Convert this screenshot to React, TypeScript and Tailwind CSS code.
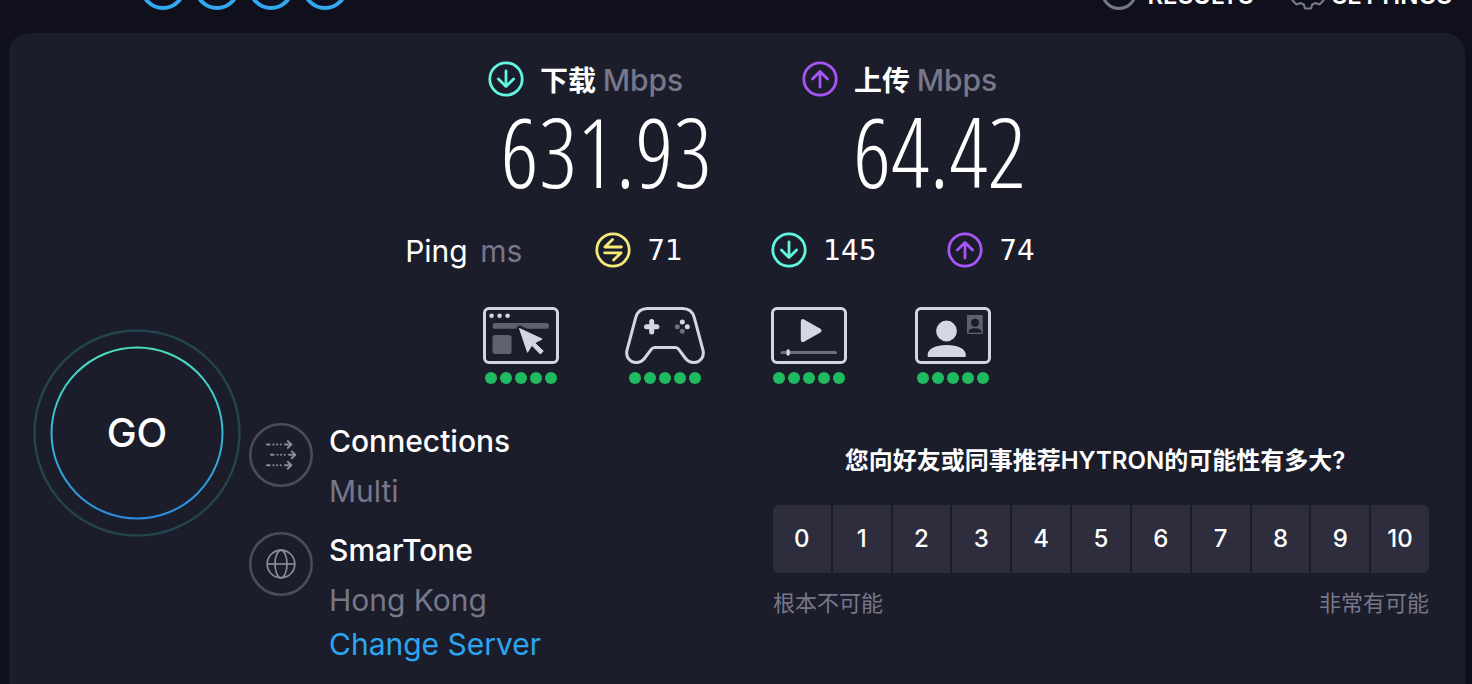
import type { ReactNode } from "react";

const RATINGS = [0, 1, 2, 3, 4, 5, 6, 7, 8, 9, 10];

function ArrowCircle({ direction }: { direction: "down" | "up" }) {
  const down = direction === "down";
  return (
    <svg
      viewBox="0 0 36 36"
      className={down ? "size-9 shrink-0 text-[#62f5e0]" : "size-9 shrink-0 text-[#a855f7]"}
      fill="none"
      stroke="currentColor"
      strokeWidth="2.8"
      strokeLinecap="round"
      strokeLinejoin="round"
      aria-hidden="true"
    >
      <circle cx="18" cy="18" r="16.2" />
      <path d={down ? "M18 10v15.4M10.4 18l7.6 7.6 7.6-7.6" : "M18 26V10.6M10.4 18l7.6-7.6 7.6 7.6"} />
    </svg>
  );
}

function IdleCircle() {
  return (
    <svg
      viewBox="0 0 36 36"
      className="size-9 shrink-0 text-[#f6eb78]"
      fill="none"
      stroke="currentColor"
      strokeWidth="2.8"
      strokeLinecap="round"
      strokeLinejoin="round"
      aria-hidden="true"
    >
      <circle cx="18" cy="18" r="16.2" />
      <path d="M26.4 15H9.8l7.8-7.4M9.6 20.8h16.6l-7.6 7.2" />
    </svg>
  );
}

function Frame({ children }: { children: ReactNode }) {
  return (
    <svg viewBox="0 0 76 57" className="h-[57px] w-[76px]" fill="none" aria-hidden="true">
      <rect x="1.5" y="1.5" width="73" height="54" rx="4.5" stroke="#d5d6e4" strokeWidth="3" />
      {children}
    </svg>
  );
}

function BrowsingIcon() {
  return (
    <Frame>
      <g fill="#d5d6e4">
        <circle cx="8.6" cy="8.7" r="2.3" />
        <circle cx="16.6" cy="8.7" r="2.3" />
        <circle cx="24.6" cy="8.7" r="2.3" />
      </g>
      <rect x="9.5" y="16" width="56.5" height="5.8" rx="2.9" fill="#5f6070" />
      <rect x="9.5" y="28" width="19" height="19" rx="2.5" fill="#5f6070" />
      <path
        d="M36.5 21.5l8 23.8 4.3-7 8.5 8.7 3-2.9-8.6-8.2 7.4-3.8z"
        fill="#1c1d2b"
        stroke="#1c1d2b"
        strokeWidth="6"
        strokeLinejoin="round"
      />
      <path d="M36.5 21.5l8 23.8 4.3-7 8.5 8.7 3-2.9-8.6-8.2 7.4-3.8z" fill="#d5d6e4" stroke="#d5d6e4" strokeLinejoin="round" />
    </Frame>
  );
}

function GamingIcon() {
  return (
    <svg viewBox="0 0 80 57" className="h-[57px] w-20" fill="none" aria-hidden="true">
      <path
        d="M22.5 1.5h35c6 0 10.3 3.4 11.8 9.2l8.6 32.2c1.9 7.2-3 12.6-9 12.6-3.6 0-6.6-1.6-8.7-4.5l-6.4-8.6c-.9-1.3-2-1.9-3.600-1.900H29.800c-1.600 0-2.700.6-3.600 1.900L19.800 51c-2.100 2.900-5.100 4.500-8.700 4.500-6 0-10.900-5.400-9-12.600l8.600-32.200C12.200 4.900 16.500 1.500 22.500 1.500z"
        stroke="#d5d6e4"
        strokeWidth="3"
        strokeLinejoin="round"
      />
      <path d="M26.7 14.5v10.4M21.5 19.7h10.4" stroke="#d5d6e4" strokeWidth="5" strokeLinecap="round" />
      <circle cx="57.3" cy="15" r="2.5" fill="#d5d6e4" />
      <circle cx="62.3" cy="19.7" r="2.5" fill="#d5d6e4" />
      <circle cx="52.3" cy="19.7" r="2.5" fill="#6d6e7e" />
      <circle cx="57.3" cy="24.3" r="2.5" fill="#6d6e7e" />
    </svg>
  );
}

function VideoIcon() {
  return (
    <Frame>
      <path d="M32 14.3v18.6L48.3 23.6z" fill="#d5d6e4" stroke="#d5d6e4" strokeWidth="4.4" strokeLinejoin="round" />
      <rect x="9.5" y="44" width="56.5" height="3" rx="1.5" fill="#6d6e7e" />
      <rect x="15.4" y="42.2" width="3.4" height="6.6" rx="1.7" fill="#d5d6e4" />
    </Frame>
  );
}

function ChatIcon() {
  return (
    <Frame>
      <circle cx="31.5" cy="24" r="10.4" fill="#d5d6e4" />
      <path d="M12.7 50v-2.5C12.7 42 20.5 38 31.7 38s19 4 19 9.500V50z" fill="#d5d6e4" />
      <rect x="52" y="8" width="15.8" height="19" rx="1" fill="#5f6070" />
      <circle cx="60" cy="15.8" r="4" fill="#1c1d2b" />
      <path d="M53.5 25.8v-1c0-2.200 2.800-3.600 6.500-3.600s6.500 1.400 6.500 3.600v1z" fill="#1c1d2b" />
    </Frame>
  );
}

function Quality({ label, children }: { label: string; children: ReactNode }) {
  return (
    <li className="flex w-20 flex-col items-center gap-2" aria-label={label}>
      {children}
      <span className="flex gap-[3px]">
        {[1, 2, 3, 4, 5].map((n) => (
          <span key={n} className="size-3 rounded-full bg-[#1fba61]" />
        ))}
      </span>
    </li>
  );
}

function ConnectionsIcon() {
  return (
    <svg viewBox="0 0 64 64" className="size-16 shrink-0" fill="none" aria-hidden="true">
      <circle cx="32" cy="32" r="30.7" stroke="#4b4b5b" strokeWidth="2.6" />
      <g stroke="#8b8b9c" strokeWidth="2" strokeLinecap="round" strokeLinejoin="round">
        {[
          [18, 21.5],
          [22, 31.8],
          [18, 42.2],
        ].map(([x, y]) => (
          <g key={y} transform={`translate(${x} ${y})`}>
            <path d="M0 0h2.600M6.400 0h.1M10 0h.1M13.600 0h.1M18 0h6" />
            <path d="M20.800-3.400L24.300 0l-3.500 3.400" />
          </g>
        ))}
      </g>
    </svg>
  );
}

function GlobeIcon() {
  return (
    <svg viewBox="0 0 64 64" className="size-16 shrink-0" fill="none" aria-hidden="true">
      <circle cx="32" cy="32" r="30.7" stroke="#4b4b5b" strokeWidth="2.6" />
      <g stroke="#8b8b9c" strokeWidth="1.7">
        <circle cx="32" cy="32" r="13.8" />
        <ellipse cx="32" cy="32" rx="6" ry="13.8" />
        <path d="M18.2 32h27.6" />
      </g>
    </svg>
  );
}

function Speed({ direction, label, value }: { direction: "down" | "up"; label: string; value: string }) {
  return (
    <div className="flex w-56 flex-col">
      <div className="flex h-9 items-center gap-4">
        <ArrowCircle direction={direction} />
        <h2 className="pt-0.5 text-[28px] font-bold whitespace-nowrap">
          {label} <span className="text-[30px] font-medium text-[#77778a]">Mbps</span>
        </h2>
      </div>
      <p className="text-right font-['Open_Sans_Condensed_Light','Open_Sans_Condensed','Roboto_Condensed',sans-serif] text-[96px] leading-[108px] font-light">
        {value}
      </p>
    </div>
  );
}

function PingValue({ icon, value }: { icon: ReactNode; value: number }) {
  return (
    <div className="flex w-44 items-center gap-4 last:w-auto">
      {icon}
      <span className="pt-0.5 font-['DejaVu_Sans',sans-serif] text-[28px]">{value}</span>
    </div>
  );
}

export default function App() {
  return (
    <div className="flex min-h-screen flex-col bg-[#10101c] font-['Inter','Noto_Sans_CJK_SC',sans-serif] text-white">
      <header className="flex h-[33px] items-end justify-between overflow-hidden pr-5 pb-[23px] pl-[140px]">
        <div className="flex shrink-0 gap-2">
          {[1, 2, 3, 4].map((n) => (
            <span key={n} className="size-[46px] rounded-full border-4 border-[#31a8f0]" />
          ))}
        </div>
        <nav className="flex h-9 shrink-0 items-center gap-9 text-2xl font-semibold">
          <a href="#results" className="flex items-center gap-2.5">
            <span className="size-9 rounded-full border-3 border-[#77778a]" />
            <span className="pt-2">RESULTS</span>
          </a>
          <a href="#settings" className="flex items-center gap-1.5">
            <svg viewBox="0 0 36 36" className="size-9" fill="none" stroke="#77778a" strokeWidth="2.2" strokeLinejoin="round" aria-hidden="true">
              <path d="M15 1.500h6l1.200 4.500 3.300 1.500 4-2.500 4 4-2.500 4L33 17v3l-2 2.500 2.500 4-4 4-4-1.500-3.300 1.500-1.200 4h-6l-1.200-4-3.300-1.500-4 1.500-4-4L5 22.500 3 20v-3l2-3.500-2.500-4 4-4 4 2.500L13.800 6z" />
            </svg>
            <span className="pt-2">SETTINGS</span>
          </a>
        </nav>
      </header>

      <main className="mr-[7px] ml-[9px] flex flex-1 flex-col rounded-t-[20px] bg-[#1c1d2b] pt-7 pr-9 pl-6">
        <section aria-label="Speed" className="flex justify-center gap-[90px] pl-[52px]">
          <Speed direction="down" label="下载" value="631.93" />
          <Speed direction="up" label="上传" value="64.42" />
        </section>

        <section aria-label="Ping" className="mt-[27px] flex h-9 items-center justify-center pr-[22px]">
          <p className="w-[190px] pt-0.5 text-[30px]">
            Ping <span className="ml-1 text-[#77778a]">ms</span>
          </p>
          <PingValue icon={<IdleCircle />} value={71} />
          <PingValue icon={<ArrowCircle direction="down" />} value={145} />
          <PingValue icon={<ArrowCircle direction="up" />} value={74} />
        </section>

        <ul className="mt-[39px] flex justify-center gap-16 pl-3">
          <Quality label="Web browsing, 5 of 5"><BrowsingIcon /></Quality>
          <Quality label="Gaming, 5 of 5"><GamingIcon /></Quality>
          <Quality label="Video streaming, 5 of 5"><VideoIcon /></Quality>
          <Quality label="Video chat, 5 of 5"><ChatIcon /></Quality>
        </ul>

        <div className="mt-[39px] flex items-start">
          <button type="button" className="-mt-[94px] grid size-[208px] shrink-0 cursor-pointer place-items-center rounded-full text-[40px] font-medium">
            <svg viewBox="0 0 208 208" className="col-start-1 row-start-1 size-[208px]" fill="none" aria-hidden="true">
              <defs>
                <linearGradient id="ring" x1="0" y1="0" x2="0" y2="1">
                  <stop offset="0" stopColor="#4be0bd" />
                  <stop offset="0.5" stopColor="#35b8d8" />
                  <stop offset="1" stopColor="#2b8be0" />
                </linearGradient>
              </defs>
              <circle cx="104" cy="104" r="102.5" stroke="#24444f" strokeWidth="2.4" />
              <circle cx="104" cy="104" r="85.5" stroke="url(#ring)" strokeWidth="2" />
            </svg>
            <span className="col-start-1 row-start-1">GO</span>
          </button>

          <dl className="ml-2 flex flex-col gap-[23px] text-[30px] leading-9">
            <div className="flex gap-4">
              <ConnectionsIcon />
              <div className="flex flex-col gap-[14px]">
                <dt className="font-medium">Connections</dt>
                <dd className="text-[#77778a]">Multi</dd>
              </div>
            </div>
            <div className="flex gap-4">
              <GlobeIcon />
              <div className="flex flex-col">
                <dt className="font-medium">SmarTone</dt>
                <dd className="mt-[14px] text-[#77778a]">Hong Kong</dd>
                <dd className="mt-2">
                  <a href="#servers" className="whitespace-nowrap text-[#2ba6f2]">Change Server</a>
                </dd>
              </div>
            </div>
          </dl>

          <section aria-labelledby="survey" className="mt-5 ml-auto w-[47%]">
            <h3 id="survey" className="pr-3 text-center text-2xl leading-9 font-semibold whitespace-nowrap">
              您向好友或同事推荐HYTRON的可能性有多大?
            </h3>
            <div className="mt-[26px] grid grid-cols-11 gap-0.5 overflow-hidden rounded-md" role="group" aria-labelledby="survey">
              {RATINGS.map((n) => (
                <button key={n} type="button" className="h-[68px] cursor-pointer bg-[#2d2d3e] text-2xl font-medium">
                  {n}
                </button>
              ))}
            </div>
            <div className="mt-3 flex justify-between text-[22px] leading-9 text-[#77778a]">
              <span>根本不可能</span>
              <span>非常有可能</span>
            </div>
          </section>
        </div>
      </main>
    </div>
  );
}
